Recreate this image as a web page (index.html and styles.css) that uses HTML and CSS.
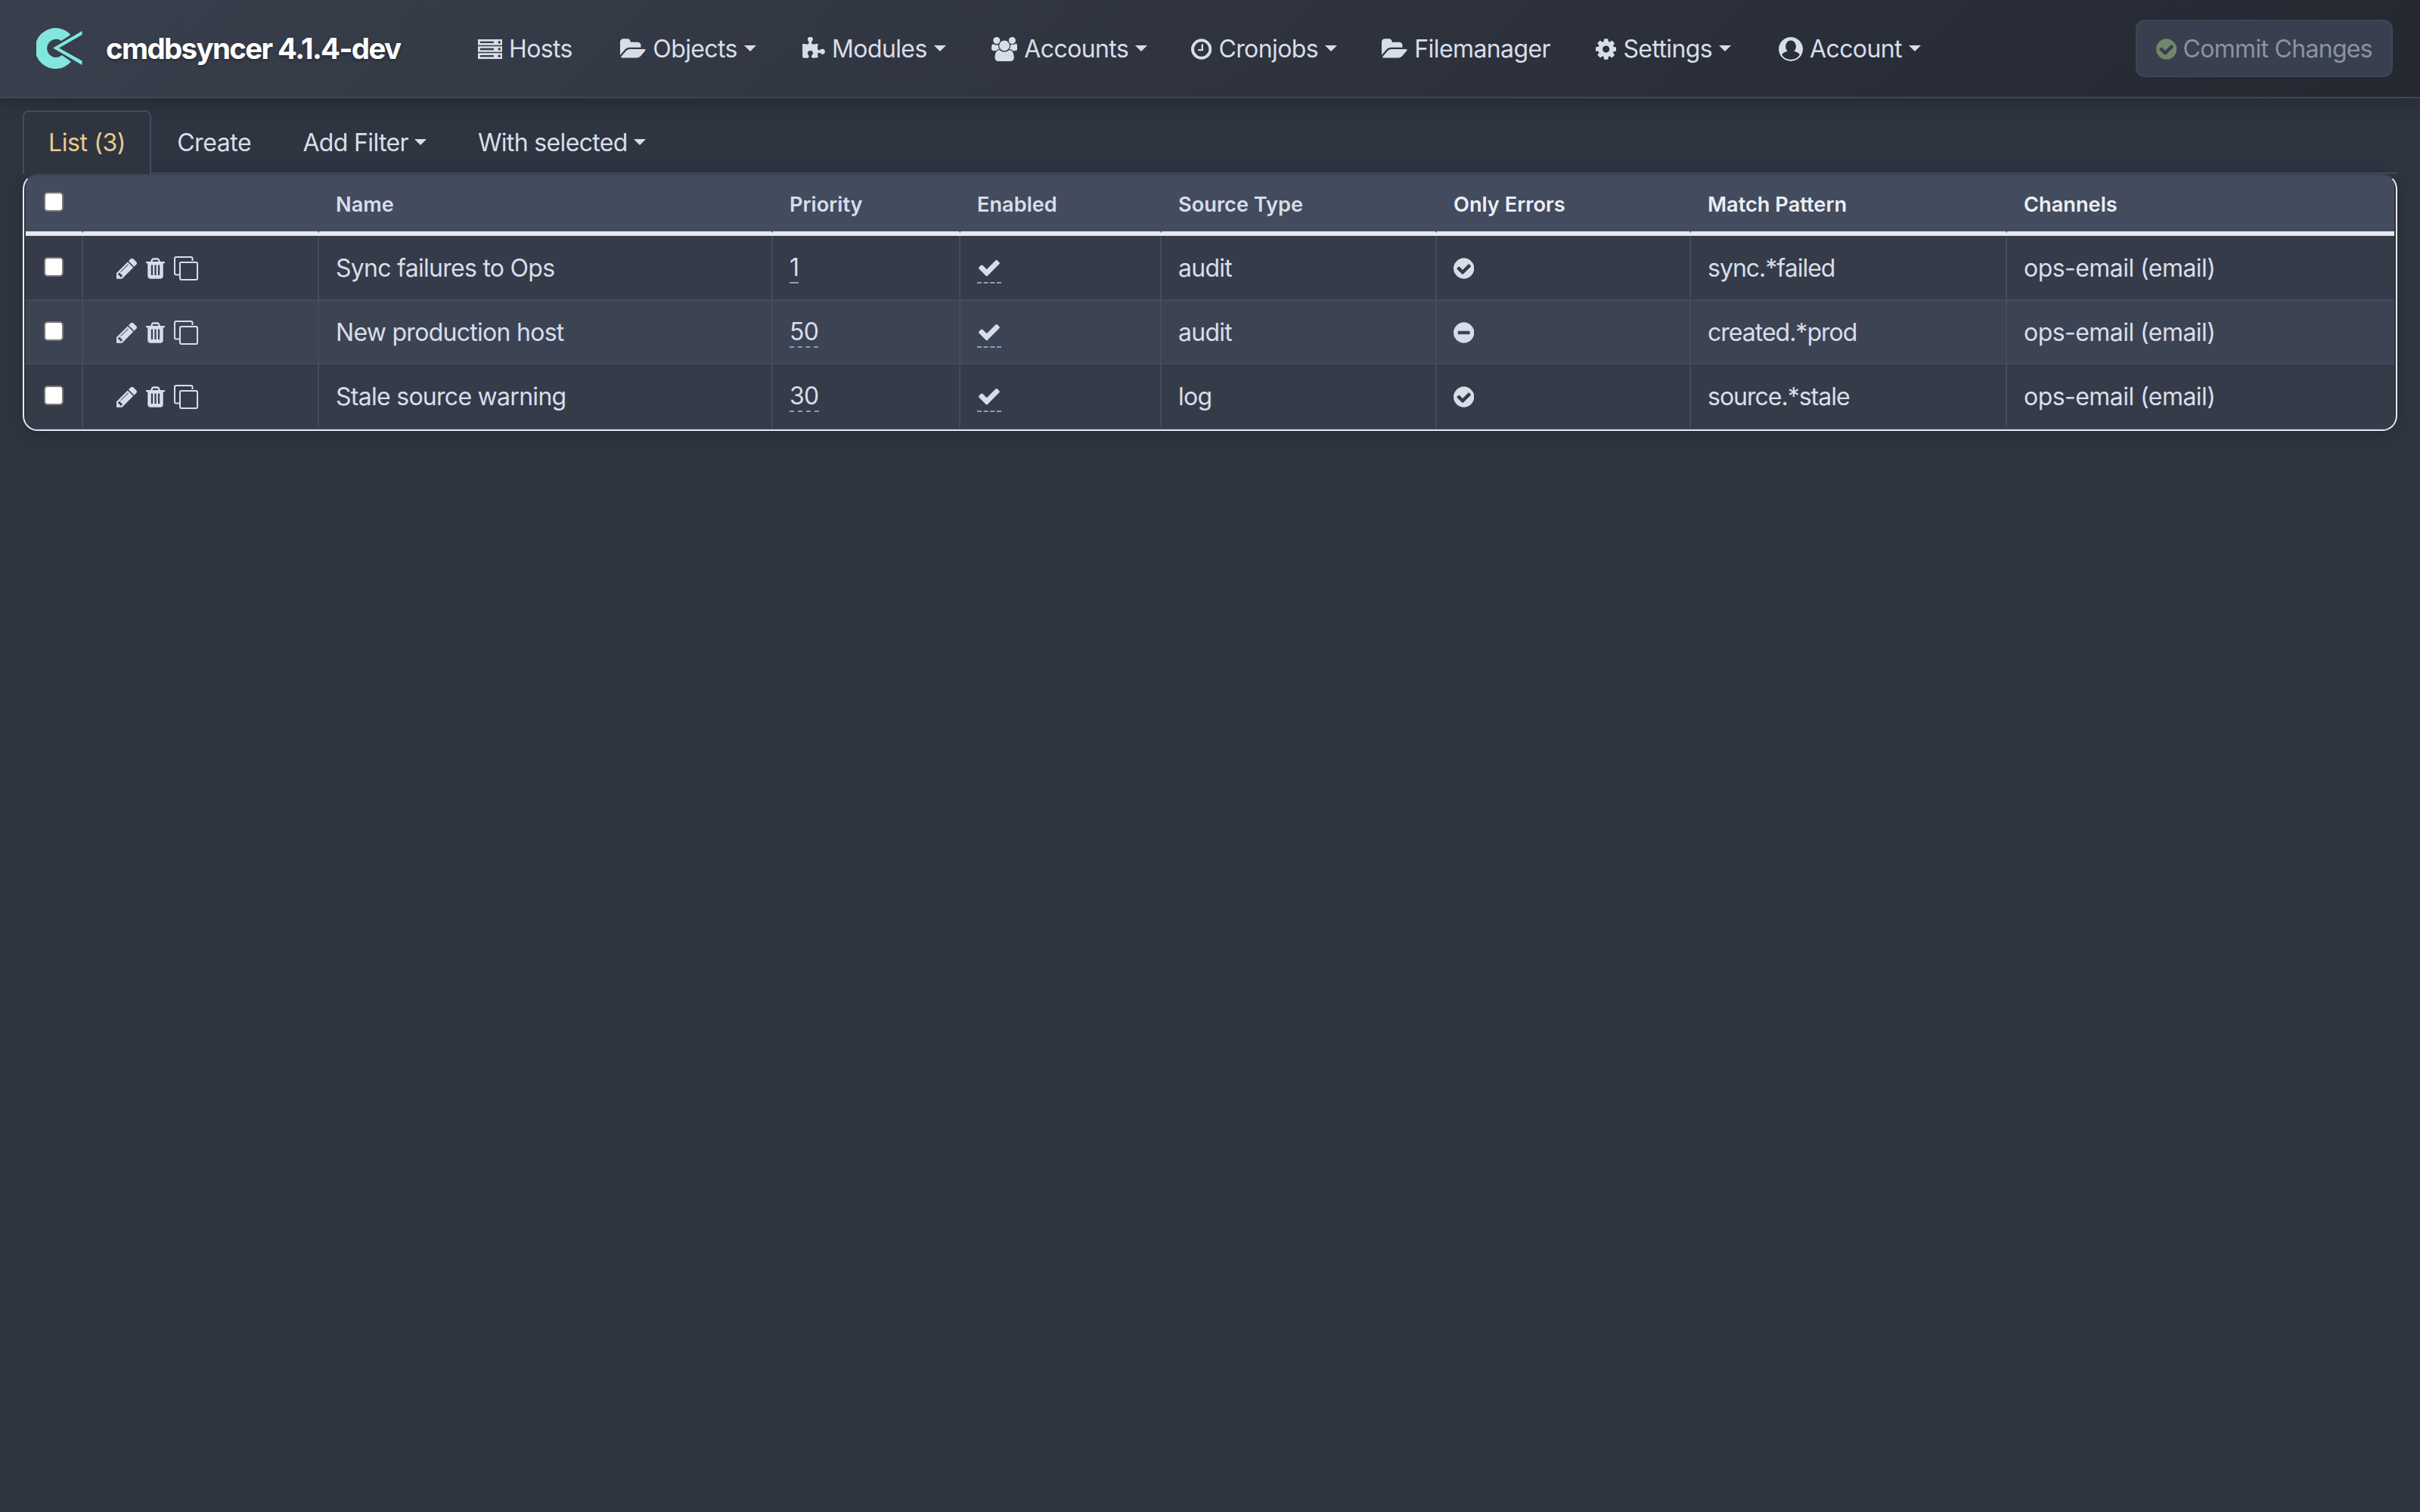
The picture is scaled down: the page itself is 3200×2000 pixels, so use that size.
FILE: index.html
```
<!DOCTYPE html>
<html lang="en">
<head>
    <meta charset="UTF-8">
    <title>Notification Rules - cmdbsyncer</title>
    <link rel="stylesheet" href="styles.css">
</head>
<body>
    <!-- icon sprite -->
    <svg class="sprite" xmlns="http://www.w3.org/2000/svg">
        <symbol id="i-server" viewBox="0 0 1792 1792">
            <path fill-rule="evenodd" d="M0 170h1792v430H0zM160 320v130h1010V320zM1580 290a95 95 0 1 0 .1 0zM0 682h1792v430H0zM160 832v130h1010V832zM1580 802a95 95 0 1 0 .1 0zM0 1194h1792v430H0zM160 1344v130h1010v-130zM1580 1314a95 95 0 1 0 .1 0z"/>
        </symbol>
        <symbol id="i-folder" viewBox="0 0 1920 1792">
            <path d="M1879 952q0 31-31 66l-336 396q-43 51-120.500 86.500t-143.500 35.500h-1088q-34 0-60.500-13t-26.500-43q0-31 31-66l336-396q43-51 120.500-86.500t143.500-35.500h1088q34 0 60.500 13t26.500 43zm-343-344v160h-832q-94 0-197 47.500t-164.500 119.500l-337 396-5 6q0-4-.5-12.500t-.5-12.500v-960q0-92 66-158t158-66h320q92 0 158 66t66 158v32h544q92 0 158 66t66 158z"/>
        </symbol>
        <symbol id="i-puzzle" viewBox="0 0 1664 1792">
            <path d="M1664 1083q0 81-44.500 135t-123.500 54q-41 0-77.500-17.500t-59-38-56.500-38-71-17.500q-110 0-110 124 0 39 16 115t15 115v5q-22 0-33 1-34 3-97.500 11.500t-115.500 13.500-98 5q-61 0-103-26.500t-42-83.500q0-37 17.500-71t38-56.500 38-59 17.500-77.500q0-79-54-123.500t-135-44.500q-84 0-143 45.500t-59 127.500q0 43 15 83t33.500 64.500 33.500 53 15 50.500q0 45-46 89-37 35-117 35-95 0-245-24-9-2-27.500-4t-27.500-4l-13-2q-1 0-3-1-2 0-2-1v-1024q2 1 17.500 3.500t34 5 21.500 3.500q150 24 245 24 80 0 117-35 46-44 46-89 0-22-15-50.500t-33.500-53-33.500-64.500-15-83q0-82 59-127.500t144-45.500q80 0 134 44.500t54 123.500q0 41-17.500 77.500t-38 59-38 56.500-17.500 71q0 57 42 83.500t103 26.500q64 0 180-15t163-17v2q-1 2-3.500 17.500t-5 34-3.500 21.500q-24 150-24 245 0 80 35 117 44 46 89 46 22 0 50.500-15t53-33.500 64.500-33.500 83-15q82 0 127.500 59t45.500 143z"/>
        </symbol>
        <symbol id="i-users" viewBox="0 0 1920 1792">
            <path d="M593 896q-162 5-265 128h-134q-82 0-138-40.500t-56-118.500q0-353 124-353 6 0 43.500 21t97.500 42.500 119 21.500q67 0 133-23-5 37-5 66 0 159 93 290zm1071 637q0 120-73 189.500t-194 69.500h-874q-121 0-194-69.500t-73-189.500q0-53 3.500-103.500t14-109 26.500-108.500 43-97.500 62-81 85.500-53.500 111.500-20q10 0 43 21.500t73 48 107 48 135 21.500 135-21.500 107-48 73-48 43-21.500q61 0 111.500 20t85.500 53.500 62 81 43 97.500 26.500 108.500 14 109 3.500 103.500zm-1024-1277q0 106-75 181t-181 75-181-75-75-181 75-181 181-75 181 75 75 181zm704 384q0 159-112.500 271.500t-271.500 112.500-271.500-112.500-112.500-271.500 112.500-271.500 271.500-112.500 271.500 112.500 112.500 271.500zm576 225q0 78-56 118.500t-138 40.500h-134q-103-123-265-128 93-131 93-290 0-29-5-66 66 23 133 23 59 0 119-21.500t97.500-42.500 43.500-21q124 0 124 353zm-128-609q0 106-75 181t-181 75-181-75-75-181 75-181 181-75 181 75 75 181z"/>
        </symbol>
        <symbol id="i-clock" viewBox="128 0 1536 1792">
            <path d="M1024 544v448q0 14-9 23t-23 9h-320q-14 0-23-9t-9-23v-64q0-14 9-23t23-9h224v-352q0-14 9-23t23-9h64q14 0 23 9t9 23zm416 352q0-148-73-273t-198-198-273-73-273 73-198 198-73 273 73 273 198 198 273 73 273-73 198-198 73-273zm224 0q0 209-103 385.500t-279.500 279.500-385.500 103-385.500-103-279.500-279.500-103-385.500 103-385.500 279.500-279.500 385.500-103 385.500 103 279.500 279.500 103 385.500z"/>
        </symbol>
        <symbol id="i-cog" viewBox="128 0 1536 1792">
            <path d="M1152 896q0-106-75-181t-181-75-181 75-75 181 75 181 181 75 181-75 75-181zm512-109v222q0 12-8 23t-20 13l-185 28q-19 54-39 91 35 50 107 138 10 12 10 25t-9 23q-27 37-99 108t-94 71q-12 0-26-9l-138-108q-44 23-91 38-16 136-29 186-7 28-36 28h-222q-14 0-24.500-8.500t-11.500-21.500l-28-184q-49-16-90-37l-141 107q-10 9-25 9-14 0-25-11-126-114-165-168-7-10-7-23 0-12 8-23 15-21 51-66.500t54-70.500q-27-50-41-99l-183-27q-13-2-21-12.500t-8-23.500v-222q0-12 8-23t19-13l186-28q14-46 39-92-40-57-107-138-10-12-10-24 0-10 9-23 26-36 98.500-107.500t94.500-71.500q13 0 26 10l138 107q44-23 91-38 16-136 29-186 7-28 36-28h222q14 0 24.500 8.500t11.500 21.500l28 184q49 16 90 37l142-107q9-9 24-9 13 0 25 10 129 119 165 170 7 8 7 22 0 12-8 23-15 21-51 66.500t-54 70.500q26 50 41 98l183 28q13 2 21 12.500t8 23.500z"/>
        </symbol>
        <symbol id="i-user" viewBox="0 0 1792 1792">
            <path fill-rule="evenodd" d="M896 0a896 896 0 1 0 .1 0zM896 256c-212 0-384 187-384 448 0 150 60 270 150 345-200 30-370 130-430 270A768 768 0 0 0 896 1664a768 768 0 0 0 664-345c-60-140-230-240-430-270 90-75 150-195 150-345 0-261-172-448-384-448z"/>
        </symbol>
        <symbol id="i-check-circle" viewBox="128 0 1536 1792">
            <path d="M1412 734q0-28-18-46l-91-90q-19-19-45-19t-45 19l-408 407-226-226q-19-19-45-19t-45 19l-91 90q-18 18-18 46 0 27 18 45l362 362q19 19 45 19 27 0 46-19l543-543q18-18 18-45zm252 162q0 209-103 385.500t-279.500 279.500-385.500 103-385.500-103-279.500-279.500-103-385.500 103-385.500 279.500-279.500 385.500-103 385.500 103 279.500 279.500 103 385.500z"/>
        </symbol>
        <symbol id="i-minus-circle" viewBox="128 0 1536 1792">
            <path d="M1344 960v-128q0-26-19-45t-45-19h-768q-26 0-45 19t-19 45v128q0 26 19 45t45 19h768q26 0 45-19t19-45zm320-64q0 209-103 385.500t-279.500 279.500-385.500 103-385.500-103-279.500-279.500-103-385.500 103-385.500 279.500-279.500 385.500-103 385.500 103 279.500 279.500 103 385.500z"/>
        </symbol>
        <symbol id="i-check" viewBox="0 0 1792 1792">
            <path d="M1671 566q0 40-28 68l-724 724-136 136q-28 28-68 28t-68-28l-136-136-362-362q-28-28-28-68t28-68l136-136q28-28 68-28t68 28l294 295 656-657q28-28 68-28t68 28l136 136q28 28 28 68z"/>
        </symbol>
        <symbol id="i-pencil" viewBox="0 0 1536 1792">
            <path d="M363 1536l91-91-235-235-91 91v107h128v128h107zm523-928q0-22-22-22-10 0-17 7l-542 542q-7 7-7 17 0 22 22 22 10 0 17-7l542-542q7-7 7-17zm-54-192l416 416-832 832h-416v-416zm683 96q0 53-37 90l-166 166-416-416 166-165q36-38 90-38 53 0 91 38l235 234q37 39 37 91z"/>
        </symbol>
        <symbol id="i-trash" viewBox="192 0 1408 1792">
            <path d="M704 1376v-704q0-14-9-23t-23-9h-64q-14 0-23 9t-9 23v704q0 14 9 23t23 9h64q14 0 23-9t9-23zm256 0v-704q0-14-9-23t-23-9h-64q-14 0-23 9t-9 23v704q0 14 9 23t23 9h64q14 0 23-9t9-23zm256 0v-704q0-14-9-23t-23-9h-64q-14 0-23 9t-9 23v704q0 14 9 23t23 9h64q14 0 23-9t9-23zm-544-992h448l-48-117q-7-9-17-11h-317q-10 2-17 11zm928 32v64q0 14-9 23t-23 9h-96v948q0 83-47 143.500t-113 60.500h-832q-66 0-113-58.500t-47-141.500v-952h-96q-14 0-23-9t-9-23v-64q0-14 9-23t23-9h309l70-167q15-37 54-63t79-26h320q40 0 79 26t54 63l70 167h309q14 0 23 9t9 23z"/>
        </symbol>
        <symbol id="i-copy" viewBox="0 0 32 32">
            <path fill="none" stroke="currentColor" stroke-width="2" d="M7 24.500H3A2 2 0 0 1 1 22.500V3A2 2 0 0 1 3 1H22.500A2 2 0 0 1 24.500 3V6M10 8H29.500A1.500 1.500 0 0 1 31 9.500V29.500A1.500 1.500 0 0 1 29.500 31H10A2 2 0 0 1 8 29.500V9.500A1.500 1.500 0 0 1 10 8z"/>
        </symbol>
    </svg>

    <nav class="navbar">
        <a class="brand" href="#">
            <svg class="logo" viewBox="0 0 62 54">
                <path d="M45.500 9A27 27 0 1 0 46 44.500L34 36A12 12 0 1 1 33 17z"/>
                <path d="M60.500 4V9L30 26.500 60.500 43.500V49L22 26.500z"/>
            </svg>
            <span>cmdbsyncer 4.1.4-dev</span>
        </a>
        <ul class="nav-links">
            <li class="hosts"><svg class="icon w32"><use href="#i-server"/></svg><span>Hosts</span></li>
            <li class="objects"><svg class="icon w34"><use href="#i-folder"/></svg><span>Objects</span><i class="caret"></i></li>
            <li class="modules"><svg class="icon w30"><use href="#i-puzzle"/></svg><span>Modules</span><i class="caret"></i></li>
            <li class="accounts"><svg class="icon w34"><use href="#i-users"/></svg><span>Accounts</span><i class="caret"></i></li>
            <li class="cronjobs"><svg class="icon w27"><use href="#i-clock"/></svg><span>Cronjobs</span><i class="caret"></i></li>
            <li class="files"><svg class="icon w34"><use href="#i-folder"/></svg><span>Filemanager</span></li>
            <li class="settings"><svg class="icon w27"><use href="#i-cog"/></svg><span>Settings</span><i class="caret"></i></li>
            <li class="account"><svg class="icon w32"><use href="#i-user"/></svg><span>Account</span><i class="caret"></i></li>
        </ul>
        <button class="commit" disabled><svg class="icon w27"><use href="#i-check-circle"/></svg><span>Commit Changes</span></button>
    </nav>

    <main class="content">
        <ul class="tabs">
            <li class="active">List (3)</li>
            <li>Create</li>
            <li class="menu">Add Filter<i class="caret"></i></li>
            <li class="menu">With selected<i class="caret"></i></li>
        </ul>

        <div class="model-list">
            <div class="row head">
                <div><input type="checkbox"></div>
                <div></div>
                <div>Name</div>
                <div>Priority</div>
                <div>Enabled</div>
                <div>Source Type</div>
                <div class="plain">Only Errors</div>
                <div class="plain">Match Pattern</div>
                <div class="plain">Channels</div>
            </div>
            <div class="row">
                <div><input type="checkbox"></div>
                <div class="actions"><svg class="icon w27"><use href="#i-pencil"/></svg><svg class="icon w25"><use href="#i-trash"/></svg><svg class="copy"><use href="#i-copy"/></svg></div>
                <div>Sync failures to Ops</div>
                <div><a class="editable">1</a></div>
                <div><a class="editable"><svg class="icon w32"><use href="#i-check"/></svg></a></div>
                <div>audit</div>
                <div><svg class="icon w27"><use href="#i-check-circle"/></svg></div>
                <div class="pattern">sync.*failed</div>
                <div class="channels">ops-email (email)</div>
            </div>
            <div class="row even">
                <div><input type="checkbox"></div>
                <div class="actions"><svg class="icon w27"><use href="#i-pencil"/></svg><svg class="icon w25"><use href="#i-trash"/></svg><svg class="copy"><use href="#i-copy"/></svg></div>
                <div>New production host</div>
                <div><a class="editable">50</a></div>
                <div><a class="editable"><svg class="icon w32"><use href="#i-check"/></svg></a></div>
                <div>audit</div>
                <div><svg class="icon w27"><use href="#i-minus-circle"/></svg></div>
                <div class="pattern">created.*prod</div>
                <div class="channels">ops-email (email)</div>
            </div>
            <div class="row">
                <div><input type="checkbox"></div>
                <div class="actions"><svg class="icon w27"><use href="#i-pencil"/></svg><svg class="icon w25"><use href="#i-trash"/></svg><svg class="copy"><use href="#i-copy"/></svg></div>
                <div>Stale source warning</div>
                <div><a class="editable">30</a></div>
                <div><a class="editable"><svg class="icon w32"><use href="#i-check"/></svg></a></div>
                <div>log</div>
                <div><svg class="icon w27"><use href="#i-check-circle"/></svg></div>
                <div class="pattern">source.*stale</div>
                <div class="channels">ops-email (email)</div>
            </div>
        </div>
    </main>
</body>
</html>
```
FILE: styles.css
```
* {
    margin: 0;
    padding: 0;
    box-sizing: border-box;
}

body {
    font-family: Inter, "Liberation Sans", sans-serif;
    font-size: 32px;
    line-height: 48px;
    letter-spacing: -0.4px;
    color: #d8dee9;
    background: #2e3440;
    min-height: 100vh;
}

ul {
    list-style: none;
}

.sprite {
    display: none;
}

.icon {
    display: block;
    height: 32px;
    fill: currentColor;
    flex: none;
}

.w25 { width: 25px; }
.w27 { width: 27.400px; }
.w30 { width: 30px; }
.w32 { width: 32px; }
.w34 { width: 34.300px; }

.caret {
    display: inline-block;
    width: 0;
    height: 0;
    margin-left: 8px;
    border-top: 8px solid currentColor;
    border-left: 8px solid transparent;
    border-right: 8px solid transparent;
    vertical-align: 8px;
}

/* Navbar */
.navbar {
    display: flex;
    align-items: center;
    height: 130px;
    padding: 0 36px 0 48px;
    background: linear-gradient(135deg, #393f4c, #242831);
    border-bottom: 2px solid #42464f;
    box-shadow: 0 4px 24px rgba(0, 0, 0, 0.25);
}

.brand {
    display: flex;
    align-items: center;
    width: 584px;
    color: #fff;
    font-size: 38.400px;
    font-weight: 700;
    letter-spacing: -1.600px;
    text-decoration: none;
    text-shadow: 0 2px 4px rgba(0, 0, 0, 0.3);
}

.logo {
    width: 62px;
    height: 54px;
    margin-right: 30px;
    fill: #81e6df;
}

.nav-links {
    display: flex;
    letter-spacing: -0.600px;
}

.nav-links li {
    display: flex;
    align-items: center;
    gap: 9px;
    padding-top: 2px;
}

.nav-links .caret {
    margin-left: 0;
    margin-top: -3px;
}

.hosts { width: 188px; }
.objects { width: 241px; }
.modules { width: 250px; }
.accounts { width: 264px; }
.cronjobs { width: 252px; }
.files { width: 283px; }
.settings { width: 242px; }

.commit {
    display: flex;
    align-items: center;
    gap: 8px;
    height: 76px;
    margin-left: auto;
    padding: 2px 25px 0;
    font: inherit;
    letter-spacing: -0.700px;
    color: #8d929d;
    background: #383f4e;
    border: 2px solid #3d4556;
    border-radius: 12px;
}

.commit .icon {
    color: #71866a;
}

/* Tabs */
.content {
    padding: 16px 30px;
}

.tabs {
    display: flex;
    height: 84px;
    border-bottom: 2px solid #434c5e;
}

.tabs li {
    height: 84px;
    padding: 17px 32px;
    border: 2px solid transparent;
    border-bottom: 0;
    border-radius: 8px 8px 0 0;
}

.tabs .menu {
    letter-spacing: -0.650px;
}

.tabs .active {
    color: #ebcb8b;
    background: #2e3440;
    border-color: #434c5e;
}

/* List */
.model-list {
    border: 2px solid #e5e9ec;
    border-top-color: #3b4252;
    border-radius: 20px;
    overflow: hidden;
    box-shadow: 0 4px 24px rgba(0, 0, 0, 0.15);
}

.row {
    display: grid;
    grid-template-columns: 76px 312px 600px 248px 266px 364px 336px 418px 1fr;
    height: 86px;
    margin: 0 2px;
    background: #353b49;
    border-bottom: 2px solid #434c5e;
    letter-spacing: -0.720px;
}

.row:last-child {
    height: 86px;
    border-bottom-color: #3b4252;
}

.row > div {
    display: flex;
    align-items: center;
    padding: 2px 22px 0;
    border-right: 2px solid #434c5e;
}

.row > div:last-child {
    border-right: 0;
}

.row .pattern {
    letter-spacing: -1px;
}

.row .channels {
    letter-spacing: -0.550px;
}

.even {
    height: 84px;
    background: #3c4353;
}

.head {
    height: 80px;
    background: #434c5e;
    border-bottom: 4px solid #e5e9ec;
    font-size: 27.200px;
    font-weight: 600;
    letter-spacing: 0;
}

.head > div {
    padding-top: 4px;
    border-bottom: 2px solid #e5e9ec;
}

.plain {
    color: #eceff4;
}

input[type="checkbox"] {
    width: 26px;
    height: 26px;
    appearance: none;
    background: #fff;
    border: 2px solid #767676;
    border-radius: 5px;
    margin: 0 0 4px 2px;
}

.head input[type="checkbox"] {
    margin-bottom: 8px;
}

.row .actions {
    gap: 12px;
    padding-left: 44px;
}

.copy {
    width: 32px;
    height: 32px;
    flex: none;
}

.editable {
    border-bottom: 2px dashed #81a1c1;
    line-height: 38px;
}

.editable .icon {
    height: 38px;
}
```
